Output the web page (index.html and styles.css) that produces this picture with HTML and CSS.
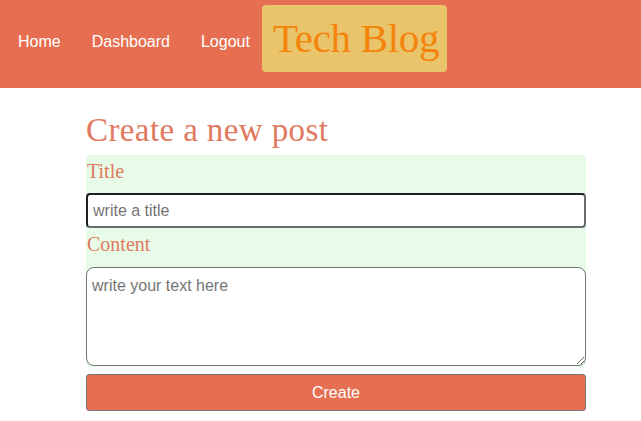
FILE: index.html
```html
<!DOCTYPE html>
<html lang="en">
<head>
<meta charset="utf-8">
<title>Tech Blog</title>
<link rel="stylesheet" href="styles.css">
</head>
<body>
<header class="site-header">
  <nav class="nav">
    <a class="nav-link" href="#">Home</a>
    <a class="nav-link" href="#">Dashboard</a>
    <a class="nav-link" href="#">Logout</a>
  </nav>
  <div class="brand">Tech Blog</div>
</header>
<main class="main">
  <h1 class="page-title">Create a new post</h1>
  <form class="post-form">
    <label class="field-label" for="title">Title</label>
    <input class="title-input" id="title" type="text" placeholder="write a title">
    <label class="field-label field-label-content" for="content">Content</label>
    <textarea class="content-input" id="content" placeholder="write your text here"></textarea>
  </form>
  <button class="create-btn" type="button">Create</button>
</main>
</body>
</html>
```
FILE: styles.css
```css
html, body {
  margin: 0;
  padding: 0;
  background: #ffffff;
}

body {
  font-family: "Liberation Sans", Arial, sans-serif;
}

.site-header {
  background: #e76f51;
  height: 88px;
  display: flex;
  align-items: flex-start;
  padding-left: 3px;
}

.nav {
  display: flex;
  align-items: center;
  height: 84px;
}

.nav-link {
  color: #ffffff;
  text-decoration: none;
  font-size: 16px;
  padding: 0 15px;
}

.nav-link + .nav-link {
  margin-left: 1px;
}

.brand {
  margin-top: 5px;
  margin-left: -3px;
  width: 185px;
  height: 67px;
  background: #e9c46a;
  border-radius: 4px;
  color: #f4840c;
  font-family: "Liberation Serif", "Times New Roman", serif;
  font-size: 41px;
  line-height: 67px;
  padding: 0 0 0 11px;
  box-sizing: border-box;
  letter-spacing: -0.3px;
  white-space: nowrap;
}

.main {
  width: 500px;
  margin: 0 auto 0 86px;
  padding-top: 23px;
}

.page-title {
  margin: 0 0 6px 0;
  font-family: "Liberation Serif", "Times New Roman", serif;
  font-weight: normal;
  font-size: 33px;
  line-height: 38px;
  letter-spacing: 0.4px;
  color: #e07a5f;
}

.post-form {
  background: #e8fbe8;
  border-radius: 3px;
  display: flex;
  flex-direction: column;
}

.field-label {
  font-family: "Liberation Serif", "Times New Roman", serif;
  font-size: 20px;
  line-height: 22px;
  color: #e07a5f;
  padding: 5px 0 11px 1px;
}

.field-label-content {
  padding-bottom: 12px;
}

.title-input {
  height: 35px;
  box-sizing: border-box;
  border: 2px solid #1f1f1f;
  border-bottom-color: #6b6b6b;
  border-right-color: #6b6b6b;
  border-radius: 4px;
  font-family: "Liberation Sans", Arial, sans-serif;
  font-size: 16px;
  padding: 0 5px;
  margin: 0;
  outline: none;
}

.content-input {
  height: 99px;
  box-sizing: border-box;
  border: 1px solid #767676;
  border-radius: 8px;
  font-family: "Liberation Sans", Arial, sans-serif;
  font-size: 16px;
  padding: 9px 5px;
  margin: 0 0 1px 0;
  resize: vertical;
}

.title-input::placeholder,
.content-input::placeholder {
  color: #757575;
}

.create-btn {
  display: block;
  width: 100%;
  height: 37px;
  margin-top: 7px;
  background: #e76f51;
  color: #ffffff;
  border: 1px solid #767676;
  border-radius: 3px;
  font-family: "Liberation Sans", Arial, sans-serif;
  font-size: 16px;
}
```
